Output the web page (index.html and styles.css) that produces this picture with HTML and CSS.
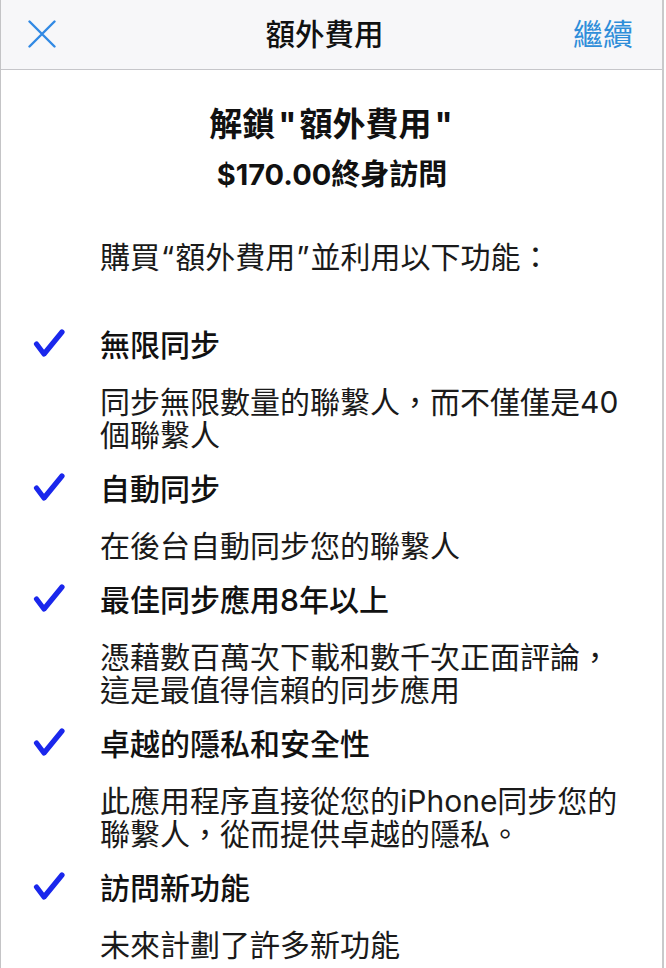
FILE: index.html
```html
<!DOCTYPE html>
<html lang="zh-Hant">
<head>
<meta charset="utf-8">
<title>額外費用</title>
<link rel="stylesheet" href="styles.css">
</head>
<body>
<div class="frame">
  <header class="navbar">
    <button class="nav-close" aria-label="關閉">
      <svg width="28" height="28" viewBox="0 0 28 28"><path d="M1.5 1.5 L26.5 26.5 M26.5 1.5 L1.5 26.5" stroke="#3189e4" stroke-width="2.4" stroke-linecap="round" fill="none"/></svg>
    </button>
    <div class="nav-title">額外費用</div>
    <button class="nav-action">繼續</button>
  </header>

  <main class="content">
    <h1 class="unlock-title">解鎖<span class="q">"</span>額外費用<span class="q">"</span></h1>
    <h2 class="unlock-price">$170.00終身訪問</h2>
    <p class="intro">購買<span class="q">“</span>額外費用<span class="q">”</span>並利用以下功能：</p>

    <ul class="features">
      <li class="feature">
        <span class="check"><svg width="32" height="28" viewBox="0 0 32 28"><path d="M3.5 15 L11 25 L29 3" stroke="#1a27ec" stroke-width="5.2" stroke-linecap="round" stroke-linejoin="round" fill="none"/></svg></span>
        <div class="feature-body">
          <div class="feature-title">無限同步</div>
          <div class="feature-desc">同步無限數量的聯繫人，而不僅僅是40<br>個聯繫人</div>
        </div>
      </li>
      <li class="feature">
        <span class="check"><svg width="32" height="28" viewBox="0 0 32 28"><path d="M3.5 15 L11 25 L29 3" stroke="#1a27ec" stroke-width="5.2" stroke-linecap="round" stroke-linejoin="round" fill="none"/></svg></span>
        <div class="feature-body">
          <div class="feature-title">自動同步</div>
          <div class="feature-desc">在後台自動同步您的聯繫人</div>
        </div>
      </li>
      <li class="feature">
        <span class="check"><svg width="32" height="28" viewBox="0 0 32 28"><path d="M3.5 15 L11 25 L29 3" stroke="#1a27ec" stroke-width="5.2" stroke-linecap="round" stroke-linejoin="round" fill="none"/></svg></span>
        <div class="feature-body">
          <div class="feature-title">最佳同步應用8年以上</div>
          <div class="feature-desc">憑藉數百萬次下載和數千次正面評論，<br>這是最值得信賴的同步應用</div>
        </div>
      </li>
      <li class="feature">
        <span class="check"><svg width="32" height="28" viewBox="0 0 32 28"><path d="M3.5 15 L11 25 L29 3" stroke="#1a27ec" stroke-width="5.2" stroke-linecap="round" stroke-linejoin="round" fill="none"/></svg></span>
        <div class="feature-body">
          <div class="feature-title">卓越的隱私和安全性</div>
          <div class="feature-desc">此應用程序直接從您的iPhone同步您的<br>聯繫人，從而提供卓越的隱私。</div>
        </div>
      </li>
      <li class="feature">
        <span class="check"><svg width="32" height="28" viewBox="0 0 32 28"><path d="M3.5 15 L11 25 L29 3" stroke="#1a27ec" stroke-width="5.2" stroke-linecap="round" stroke-linejoin="round" fill="none"/></svg></span>
        <div class="feature-body">
          <div class="feature-title">訪問新功能</div>
          <div class="feature-desc">未來計劃了許多新功能</div>
        </div>
      </li>
    </ul>
  </main>
</div>
</body>
</html>
```

FILE: styles.css
```css
* { box-sizing: border-box; }

html, body {
  margin: 0;
  padding: 0;
  background: #ffffff;
}

body {
  font-family: Inter, "Noto Sans CJK TC", sans-serif;
  color: #141414;
}

.frame {
  width: 664px;
  height: 968px;
  border-left: 1px solid #c4c4c6;
  border-right: 2px solid #c9c9cb;
  overflow: hidden;
  background: #ffffff;
}

.navbar {
  height: 70px;
  background: #f7f7f9;
  border-bottom: 1px solid #c6c6ca;
  display: flex;
  align-items: center;
  justify-content: space-between;
  padding: 0 29px 2px 27px;
}

.nav-close {
  border: 0;
  background: none;
  padding: 0;
  width: 28px;
  height: 28px;
  display: flex;
}

.nav-title {
  font-size: 29.5px;
  font-weight: 500;
  line-height: 40px;
  color: #111;
  margin-left: 20px;
}

.nav-action {
  border: 0;
  background: none;
  padding: 0;
  font-family: inherit;
  font-size: 30px;
  line-height: 40px;
  color: #2f8ed9;
}

.content {
  padding: 33px 0 0 0;
}

.q {
  margin: 0 3px;
}

.unlock-title {
  margin: 0;
  text-align: center;
  font-size: 33px;
  font-weight: 700;
  line-height: 42px;
  color: #111;
  padding-left: 2px;
}

.unlock-price {
  margin: 12px 0 0 0;
  text-align: center;
  font-size: 29px;
  font-weight: 700;
  line-height: 36px;
  color: #111;
  padding-left: 1px;
}

.intro {
  margin: 44px 0 0 99px;
  font-size: 30px;
  line-height: 40px;
  color: #1a1a1a;
}

.intro .q {
  margin: 0 1px;
}

.features {
  list-style: none;
  margin: 48px 0 0 0;
  padding: 0;
  display: flex;
  flex-direction: column;
  gap: 17px;
}

.feature {
  display: grid;
  grid-template-columns: 99px 1fr;
}

.check {
  display: flex;
  padding: 4px 0 0 32px;
}

.feature-title {
  font-size: 30px;
  font-weight: 500;
  line-height: 40px;
  color: #111;
}

.feature-desc {
  margin-top: 21px;
  font-size: 30px;
  line-height: 33px;
  color: #1a1a1a;
  white-space: nowrap;
}
```
